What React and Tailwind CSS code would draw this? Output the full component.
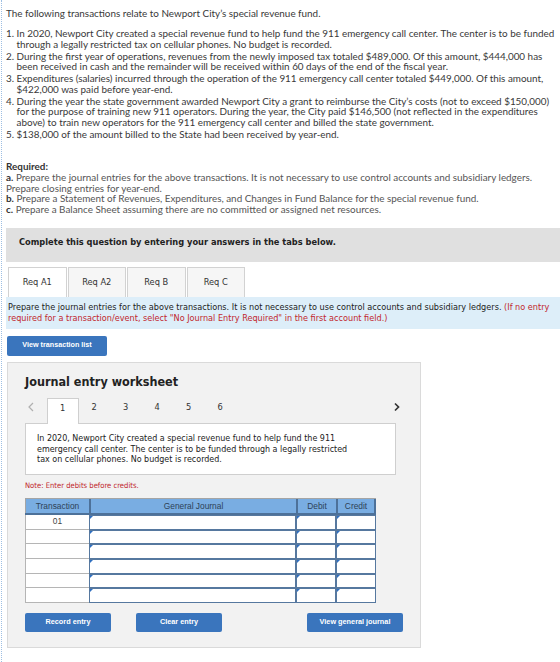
import React from "react";

// font stacks used across the page
const BODY = "font-[family-name:Lato,sans-serif]";
const TAHOMA = "font-[family-name:'DejaVu_Sans_Condensed','DejaVu_Sans',sans-serif]";
const ARIAL = "font-[family-name:'Liberation_Sans',Arial,sans-serif]";

const transactions = [
  [
    "1.",
    [
      "In 2020, Newport City created a special revenue fund to help fund the 911 emergency call center. The center is to be funded",
      "through a legally restricted tax on cellular phones. No budget is recorded.",
    ],
  ],
  [
    "2.",
    [
      "During the first year of operations, revenues from the newly imposed tax totaled $489,000. Of this amount, $444,000 has",
      "been received in cash and the remainder will be received within 60 days of the end of the fiscal year.",
    ],
  ],
  [
    "3.",
    [
      "Expenditures (salaries) incurred through the operation of the 911 emergency call center totaled $449,000. Of this amount,",
      "$422,000 was paid before year-end.",
    ],
  ],
  [
    "4.",
    [
      "During the year the state government awarded Newport City a grant to reimburse the City\u2019s costs (not to exceed $150,000)",
      "for the purpose of training new 911 operators. During the year, the City paid $146,500 (not reflected in the expenditures",
      "above) to train new operators for the 911 emergency call center and billed the state government.",
    ],
  ],
  ["5.", ["$138,000 of the amount billed to the State had been received by year-end."]],
];

const tabs = ["Req A1", "Req A2", "Req B", "Req C"];
const pages = ["1", "2", "3", "4", "5", "6"];

// input cell with the little blue corner marker
const EntryCell = () => (
  <div className="relative h-full border border-[#56789f] bg-white">
    <span className="absolute left-0 top-0 h-0 w-0 border-t-[3px] border-r-[3px] border-t-[#2f6fc0] border-r-transparent" />
  </div>
);

const BlueButton = ({ label, width }) => (
  <button
    className={`h-[19px] rounded-[2px] bg-[#3a75bd] text-[7.3px] font-bold text-white ${ARIAL} ${width}`}
  >
    {label}
  </button>
);

const Chevron = ({ dir }) =>
  dir === "left" ? (
    <svg width="6" height="10" viewBox="0 0 6 10">
      <path d="M5 1 L1 5 L5 9" fill="none" stroke="#b0b0b0" strokeWidth="1.2" />
    </svg>
  ) : (
    <svg width="6" height="10" viewBox="0 0 6 10">
      <path d="M1 1.5 L4.5 5 L1 8.5" fill="none" stroke="#333" strokeWidth="1.7" />
    </svg>
  );

export default function App() {
  return (
    <div className="h-[662px] w-[560px] overflow-hidden bg-white">
      <div className="ml-[1px] h-full border-l border-dotted border-[#9dbfe3] pl-[4px]">
        {/* problem statement */}
        <div className={`${BODY} text-[9.9px] leading-[10.5px] text-[#383838] whitespace-nowrap`}>
          <p className="pt-[8px]">The following transactions relate to Newport City’s special revenue fund.</p>
          <div className="mt-[9.5px] flex flex-col gap-[1.5px]">
            {transactions.map(([num, lines]) => (
              <div key={num} className="flex">
                <span className="w-[8px] shrink-0 text-right">{num}</span>
                <div className="ml-[2.5px]">
                  {lines.map((line) => (
                    <div key={line}>{line}</div>
                  ))}
                </div>
              </div>
            ))}
          </div>
        </div>

        <div className={`${BODY} mt-[22px] text-[9.9px] leading-[10.75px] text-[#555] whitespace-nowrap`}>
          <div className="font-bold text-[#333]">Required:</div>
          <div>
            <b className="text-[#333]">a.</b> Prepare the journal entries for the above transactions. It is not necessary to use control
            accounts and subsidiary ledgers.
          </div>
          <div>Prepare closing entries for year-end.</div>
          <div>
            <b className="text-[#333]">b.</b> Prepare a Statement of Revenues, Expenditures, and Changes in Fund Balance for the special
            revenue fund.
          </div>
          <div>
            <b className="text-[#333]">c.</b> Prepare a Balance Sheet assuming there are no committed or assigned net resources.
          </div>
        </div>

        {/* answer area */}
        <div className={`${TAHOMA} mt-[13px] h-[34px] bg-[#e0e0e0] pl-[13px] pt-[9px] text-[9.2px] font-bold leading-[10px] text-[#222]`}>
          Complete this question by entering your answers in the tabs below.
        </div>

        <div className={`${TAHOMA} mt-[5px] flex gap-[1px] pl-[2px] text-[9.2px] text-[#333]`}>
          {tabs.map((t, i) => (
            <div
              key={t}
              className={`flex h-[30px] w-[58.5px] items-center justify-center border border-b-0 border-[#d2d2d2] ${
                i === 0 ? "bg-white" : "bg-[#f6f6f6]"
              }`}
            >
              {t}
            </div>
          ))}
        </div>

        <div className={`${TAHOMA} h-[32px] bg-[#ddeef9] pl-[2px] pt-[5px] text-[9.05px] leading-[11px] whitespace-nowrap text-[#222]`}>
          <div>
            Prepare the journal entries for the above transactions. It is not necessary to use control accounts and subsidiary ledgers.{" "}
            <span className="text-[#c1272d]">(If no entry</span>
          </div>
          <div className="text-[#c1272d]">
            required for a transaction/event, select "No Journal Entry Required" in the first account field.)
          </div>
        </div>

        <div className="ml-[1px] mt-[7px] flex">
          <button className={`h-[20px] w-[100px] rounded-[2px] bg-[#3a75bd] text-[7.2px] font-bold text-white ${ARIAL}`}>
            View transaction list
          </button>
        </div>

        {/* journal entry worksheet */}
        <div className="ml-[1px] mt-[6px] h-[286px] w-[414px] border border-[#dadada] bg-[#f2f2f2] px-[17px]">
          <h2 className={`${TAHOMA} pt-[12px] text-[12.5px] font-bold leading-[14px] text-[#222]`}>Journal entry worksheet</h2>

          <div className={`${TAHOMA} mt-[9px] flex items-start text-[9.2px] leading-[12px] text-[#333]`}>
            <span className="flex w-[22px] pl-[3px] pt-[4px]">
              <Chevron dir="left" />
            </span>
            {pages.map((p, i) => (
              <div
                key={p}
                className={`relative z-10 flex h-[25px] w-[31.5px] justify-center pt-[3px] ${
                  i === 0 ? "-mb-[1px] h-[26px] border border-b-0 border-[#cfcfcf] bg-white" : ""
                }`}
              >
                {p}
              </div>
            ))}
            <span className="ml-auto mr-[3px] flex pt-[4px]">
              <Chevron dir="right" />
            </span>
          </div>

          <div className={`${TAHOMA} w-[371px] border border-[#cfcfcf] bg-white px-[11px] py-[9px] text-[8.9px] leading-[10.8px] whitespace-nowrap text-[#222]`}>
            <div>In 2020, Newport City created a special revenue fund to help fund the 911</div>
            <div>emergency call center. The center is to be funded through a legally restricted</div>
            <div>tax on cellular phones. No budget is recorded.</div>
          </div>

          <p className={`${TAHOMA} mt-[7px] text-[7.6px] leading-[8px] text-[#c1272d]`}>Note: Enter debits before credits.</p>

          {/* entry grid */}
          <div className={`${ARIAL} mt-[8px] w-[351px] border-t border-[#a5a5a5] text-[8.4px] text-[#2e4257]`}>
            <div className="grid h-[16px] grid-cols-[64px_207px_40px_40px] border-b-2 border-[#4d7199] bg-[#79ade2] leading-[14px]">
              <div className="border-l border-[#a5a5a5] text-center">Transaction</div>
              <div className="border-l-2 border-[#4d7199] text-center">General Journal</div>
              <div className="border-l-2 border-[#4d7199] text-center">Debit</div>
              <div className="border-x-2 border-[#4d7199] text-center">Credit</div>
            </div>
            {[0, 1, 2, 3, 4, 5].map((r) => (
              <div key={r} className="grid h-[14.67px] grid-cols-[64px_207px_40px_40px]">
                <div className="border-b border-l border-[#b5b5b5] bg-white text-center leading-[13px] text-[#444]">
                  {r === 0 ? "01" : ""}
                </div>
                <EntryCell />
                <EntryCell />
                <EntryCell />
              </div>
            ))}
          </div>

          <div className="mt-[10px] flex">
            <BlueButton label="Record entry" width="w-[86px]" />
            <BlueButton label="Clear entry" width="ml-[25px] w-[86px]" />
            <BlueButton label="View general journal" width="ml-auto w-[96px]" />
          </div>
        </div>
      </div>
    </div>
  );
}
